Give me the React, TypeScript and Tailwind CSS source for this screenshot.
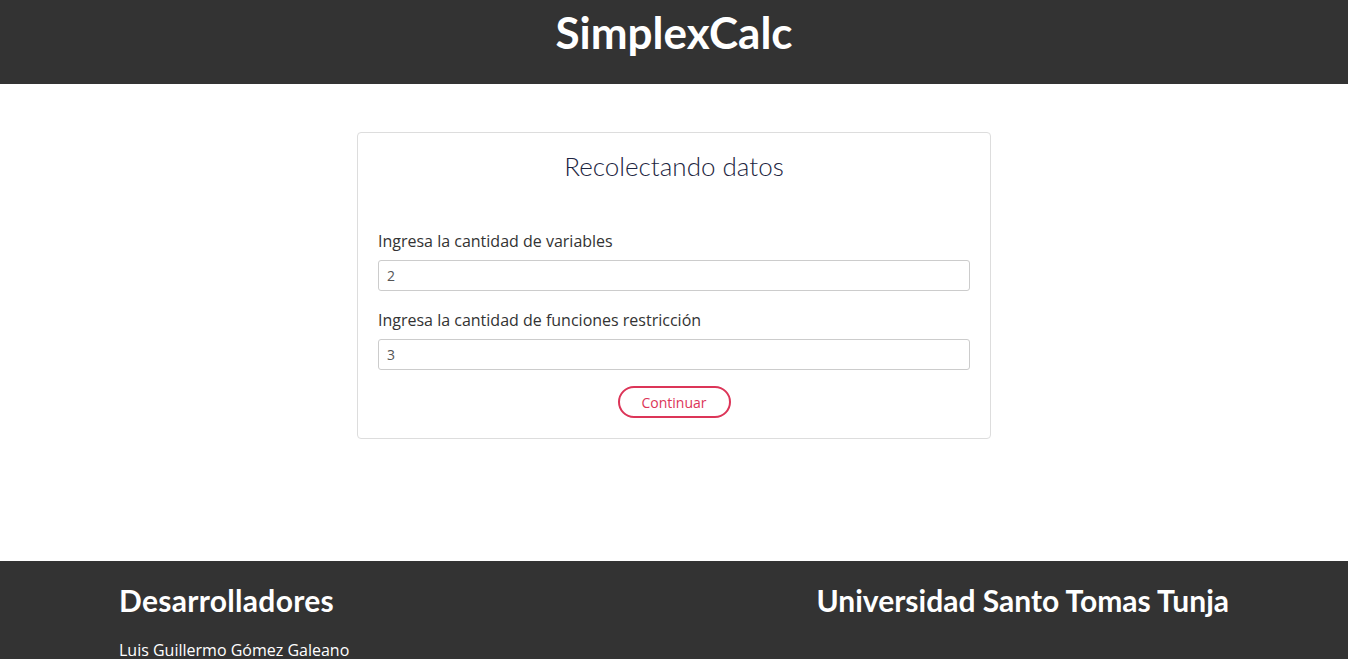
import React from 'react';

const App: React.FC = () => {
  return (
    <div className="min-h-screen bg-white" style={{ fontFamily: "'Open Sans', sans-serif" }}>
      {/* Header */}
      <header className="bg-[#333333] h-[84px] flex items-start justify-center">
        <h1 className="-mt-[1px] text-[44px] font-bold text-white font-['Lato',sans-serif]">
          SimplexCalc
        </h1>
      </header>

      {/* Form card */}
      <main className="flex justify-center pt-[48px] pb-[122px]">
        <div className="w-[634px] border border-[#dddddd] rounded-[4px] px-[20px] pt-[17px] pb-[20px]">
          <h2 className="text-center text-[26px] font-light text-[#1c2541] font-['Lato',sans-serif] leading-[32px]">
            Recolectando datos
          </h2>
          <div className="mt-[47px]">
            <label className="block text-[16px] text-[#333333] leading-[24px]">
              Ingresa la cantidad de variables
            </label>
            <input
              type="text"
              defaultValue="2"
              className="mt-[7px] w-full h-[31px] border border-[#cccccc] rounded-[3px] px-[8px] text-[14px] text-[#555555] outline-none"
            />
          </div>
          <div className="mt-[17px]">
            <label className="block text-[16px] text-[#333333] leading-[24px]">
              Ingresa la cantidad de funciones restricción
            </label>
            <input
              type="text"
              defaultValue="3"
              className="mt-[7px] w-full h-[31px] border border-[#cccccc] rounded-[3px] px-[8px] text-[14px] text-[#555555] outline-none"
            />
          </div>
          <div className="flex justify-center mt-[16px]">
            <button className="w-[113px] h-[32px] border-2 border-[#dc3558] rounded-full text-[14px] text-[#dc3558] bg-white">
              Continuar
            </button>
          </div>
        </div>
      </main>

      {/* Footer */}
      <footer className="bg-[#333333] text-white">
        <div className="w-[1110px] mx-auto flex justify-between pt-[21px] pb-[20px]">
          <div>
            <h3 className="text-[30px] font-bold font-['Lato',sans-serif] tracking-[0.3px] leading-[36px]">Desarrolladores</h3>
            <p className="mt-[20px] text-[16px] leading-[24px]">Luis Guillermo Gómez Galeano</p>
          </div>
          <div>
            <h3 className="text-[30px] font-bold font-['Lato',sans-serif] leading-[36px] text-right">
              Universidad Santo Tomas Tunja
            </h3>
          </div>
        </div>
      </footer>
    </div>
  );
};

export default App;
